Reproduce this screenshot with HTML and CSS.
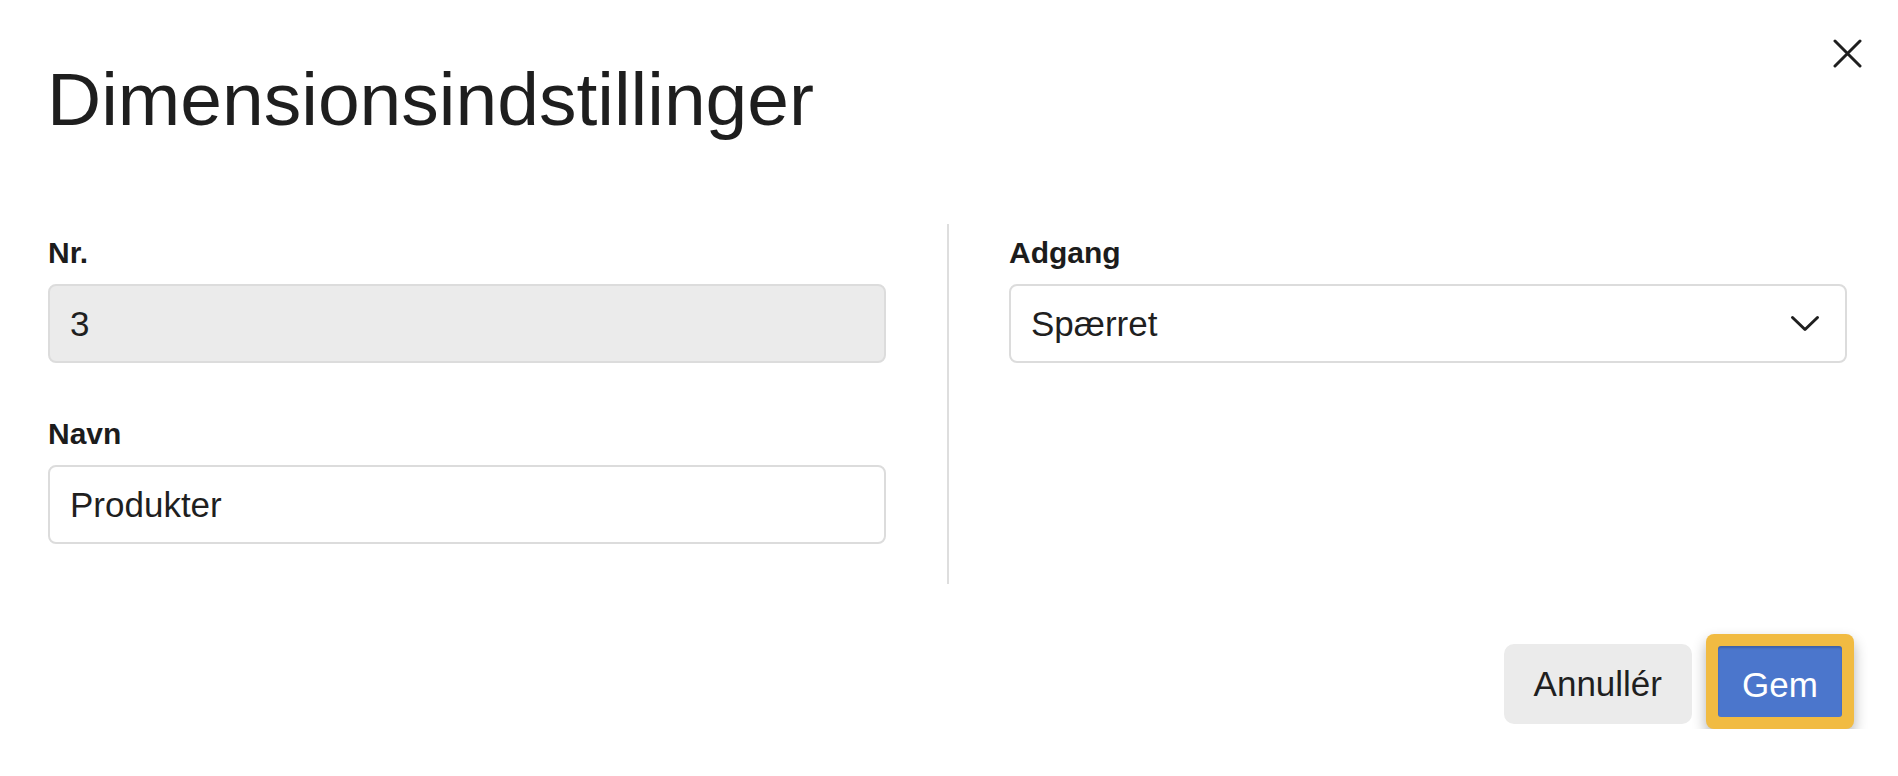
FILE: index.html
```html
<!DOCTYPE html>
<html lang="da">
<head>
<meta charset="utf-8">
<title>Dimensionsindstillinger</title>
<link rel="stylesheet" href="styles.css">
</head>
<body>
<div class="dialog">
  <div class="header">
    <h1 class="title">Dimensionsindstillinger</h1>
    <button class="close" aria-label="Luk">
      <svg width="29" height="29" viewBox="0 0 29 29"><path d="M2 2 L27 27 M27 2 L2 27" stroke="#1f1f1f" stroke-width="3" stroke-linecap="round" fill="none"/></svg>
    </button>
  </div>
  <div class="form">
    <div class="col">
      <div class="field">
        <label class="label">Nr.</label>
        <div class="input disabled">3</div>
      </div>
      <div class="field">
        <label class="label">Navn</label>
        <div class="input">Produkter</div>
      </div>
    </div>
    <div class="divider"></div>
    <div class="col">
      <div class="field">
        <label class="label">Adgang</label>
        <div class="input select">
          <span>Spærret</span>
          <svg class="chevron" width="30" height="17" viewBox="0 0 30 17"><path d="M2.5 2.5 L15 14.5 L27.5 2.5" stroke="#1f1f1f" stroke-width="3" stroke-linecap="round" stroke-linejoin="round" fill="none"/></svg>
        </div>
      </div>
    </div>
  </div>
  <div class="footer">
    <button class="btn cancel">Annullér</button>
    <span class="focus-ring"><button class="btn primary">Gem</button></span>
  </div>
</div>
</body>
</html>
```

FILE: styles.css
```css
* { box-sizing: border-box; }
html, body { margin: 0; background: #ffffff; }
body {
  font-family: "Liberation Sans", Arial, Helvetica, sans-serif;
  color: #1f1f1f;
}
.dialog {
  padding: 39px 36px 0 48px;
}
.header {
  display: flex;
  justify-content: space-between;
  align-items: flex-start;
}
.title {
  margin: 17px 0 0 -1px;
  font-size: 75px;
  font-weight: 400;
  line-height: 86px;
  color: #1e1e1e;
}
.close {
  width: 29px;
  height: 29px;
  padding: 0;
  border: 0;
  background: none;
  display: block;
}
.close svg { display: block; }
.form {
  margin-top: 82px;
  display: grid;
  grid-template-columns: 838px 2px 838px;
  column-gap: 60.5px;
}
.col {
  padding: 12px 0 40px;
}
.divider {
  background: #dedede;
}
.field + .field { margin-top: 54px; }
.label {
  display: block;
  font-size: 30px;
  font-weight: 700;
  line-height: 34px;
  margin-bottom: 14px;
  color: #1c1c1c;
}
.input {
  height: 79px;
  border: 2px solid #dcdcdc;
  border-radius: 8px;
  background: #ffffff;
  padding: 0 20px;
  font-size: 35px;
  display: flex;
  align-items: center;
  color: #1f1f1f;
}
.input.disabled {
  background: #ebebeb;
}
.select {
  justify-content: space-between;
  padding-right: 25px;
}
.chevron { display: block; }
.footer {
  margin-top: 60px;
  display: flex;
  justify-content: flex-end;
  align-items: flex-start;
  padding-right: 8px;
}
.btn {
  font-family: "Liberation Sans", Arial, Helvetica, sans-serif;
  font-size: 35px;
  border: 0;
  margin: 0;
  cursor: pointer;
}
.cancel {
  height: 80px;
  line-height: 80px;
  padding: 0 30px;
  border-radius: 10px;
  background: #ebebeb;
  color: #1f1f1f;
  margin-right: 14px;
}
.focus-ring {
  display: block;
  margin-top: -10px;
  padding: 12px;
  background: #f1bb42;
  border-radius: 8px;
  box-shadow: 0 7px 14px rgba(0, 0, 0, 0.3);
}
.primary {
  display: block;
  width: 124px;
  height: 71px;
  padding: 6px 0 0;
  line-height: 65px;
  background: #4b76cc;
  color: #ffffff;
  border-radius: 3px;
  box-shadow: inset 0 2px 2px rgba(0, 0, 0, 0.18);
}
```
